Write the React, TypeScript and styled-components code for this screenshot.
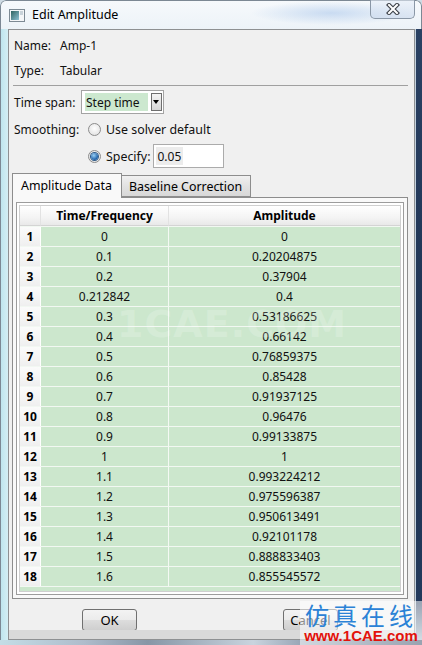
import styled, { createGlobalStyle } from 'styled-components';

const GlobalStyle = createGlobalStyle`
  html, body {
    margin: 0;
    padding: 0;
  }
  body {
    width: 422px;
    height: 645px;
    overflow: hidden;
    background: #cfdbe4;
    font-family: "Noto Sans", "Liberation Sans", sans-serif;
    font-size: 12px;
    color: #111;
  }
`;

const rows: [string, string][] = [
  ['0', '0'],
  ['0.1', '0.20204875'],
  ['0.2', '0.37904'],
  ['0.212842', '0.4'],
  ['0.3', '0.53186625'],
  ['0.4', '0.66142'],
  ['0.5', '0.76859375'],
  ['0.6', '0.85428'],
  ['0.7', '0.91937125'],
  ['0.8', '0.96476'],
  ['0.9', '0.99133875'],
  ['1', '1'],
  ['1.1', '0.993224212'],
  ['1.2', '0.975596387'],
  ['1.3', '0.950613491'],
  ['1.4', '0.92101178'],
  ['1.5', '0.888833403'],
  ['1.6', '0.855545572'],
];

function WindowIcon() {
  return (
    <svg width='16' height='13' viewBox='0 0 16 13'>
      <defs>
        <linearGradient id='wi' x1='0' y1='0' x2='1' y2='1'>
          <stop offset='0' stopColor='#2f6360' />
          <stop offset='1' stopColor='#8cc0d2' />
        </linearGradient>
      </defs>
      <rect x='0.5' y='0.5' width='15' height='12' fill='#f4f6f8' stroke='#7d8a94' />
      <rect x='2' y='2' width='8' height='9' fill='url(#wi)' />
      <rect x='11' y='2' width='3' height='4' fill='#c9d3da' />
    </svg>
  );
}

function CloseGlyph() {
  return (
    <svg width='14' height='12' viewBox='0 0 14 12'>
      <path d='M3 2 L11 10 M11 2 L3 10' stroke='#3a3f46' strokeWidth='4.2' strokeLinecap='square' />
      <path d='M3 2 L11 10 M11 2 L3 10' stroke='#ffffff' strokeWidth='2' strokeLinecap='square' />
    </svg>
  );
}

function App() {
  return (
    <>
      <GlobalStyle />
      <WindowStyle>
        <TitleBar>
          <WindowIcon />
          <TitleText>Edit Amplitude</TitleText>
          <CloseButton>
            <CloseGlyph />
          </CloseButton>
        </TitleBar>
        <FrameBody>
          <LeftEdge />
          <Panel>
            <Content>
              <InfoRow>
                <Label width={46}>Name:</Label>
                <span>Amp-1</span>
              </InfoRow>
              <InfoRow>
                <Label width={46}>Type:</Label>
                <span>Tabular</span>
              </InfoRow>
              <Separator />
              <FieldRow>
                <Label width={67}>Time span:</Label>
                <Combo>
                  <ComboValue>Step time</ComboValue>
                  <ComboArrow />
                </Combo>
              </FieldRow>
              <FieldRow>
                <Label width={74}>Smoothing:</Label>
                <RadioOption>
                  <Radio checked={false} />
                  Use solver default
                </RadioOption>
              </FieldRow>
              <FieldRow>
                <Label width={74} />
                <RadioOption>
                  <Radio checked />
                  Specify:
                </RadioOption>
                <TextInput>
                  <Selected>0.05</Selected>
                </TextInput>
              </FieldRow>

              <TabStrip>
                <Tab active>Amplitude Data</Tab>
                <Tab active={false}>Baseline Correction</Tab>
              </TabStrip>
              <TabPanel>
                <TableFrame>
                  <Grid>
                    <HeaderRow>
                      <HeadCell />
                      <HeadCell>Time/Frequency</HeadCell>
                      <HeadCell>Amplitude</HeadCell>
                    </HeaderRow>
                    {rows.map(([t, a], i) => (
                      <DataRow key={i}>
                        <NumCell>{i + 1}</NumCell>
                        <DataCell divider>{t}</DataCell>
                        <DataCell divider={false}>{a}</DataCell>
                      </DataRow>
                    ))}
                    <Filler />
                  </Grid>
                </TableFrame>
                <BigMark>1CAE.COM</BigMark>
              </TabPanel>
            </Content>
            <ButtonRow>
              <Button>OK</Button>
              <Button>Cancel</Button>
            </ButtonRow>
            <StatusStrip />
          </Panel>
          <RightEdge />
        </FrameBody>
        <FrameBottom />
        <Watermark>
          <MarkCn>仿真在线</MarkCn>
          <MarkUrl>www.1CAE.com</MarkUrl>
        </Watermark>
      </WindowStyle>
    </>
  );
}

const WindowStyle = styled.div`
  position: relative;
  box-sizing: border-box;
  width: 422px;
  height: 645px;
  display: flex;
  flex-direction: column;
  border-radius: 6px 6px 0 0;
  overflow: hidden;
  background: #dbe9f0;
`;

const TitleBar = styled.div`
  box-sizing: border-box;
  height: 29px;
  flex: none;
  display: flex;
  align-items: center;
  gap: 7px;
  padding-left: 8px;
  border: 1px solid #7c8894;
  border-bottom: none;
  border-radius: 6px 6px 0 0;
  background:
    radial-gradient(ellipse 80px 12px at 330px 12px, rgba(150, 185, 230, 0.45), transparent),
    linear-gradient(180deg, #f6f9fc 0%, #edf3f8 100%);
`;

const TitleText = styled.span`
  font-size: 12.5px;
  color: #000;
  margin-top: -1px;
`;

const CloseButton = styled.div`
  margin-left: auto;
  margin-right: 6px;
  align-self: flex-start;
  margin-top: -1px;
  width: 45px;
  height: 19px;
  box-sizing: border-box;
  display: flex;
  align-items: center;
  justify-content: center;
  border: 1px solid #8a97a6;
  border-top: none;
  border-radius: 0 0 5px 5px;
  background: linear-gradient(180deg, rgba(230, 238, 248, 0.6), rgba(200, 215, 235, 0.6));
`;

const FrameBody = styled.div`
  flex: 1;
  min-height: 0;
  display: flex;
`;

const LeftEdge = styled.div`
  flex: 0 0 8px;
  border-left: 1px solid #7c8894;
  box-sizing: border-box;
  background: linear-gradient(90deg, #bfe5ee, #d4eef4);
`;

const RightEdge = styled.div`
  flex: 0 0 7px;
  box-sizing: border-box;
  border-left: 1px solid #c4d2dd;
  background: linear-gradient(180deg, #2a4163 0%, #1d3252 60%, #233a5c 94%, #9fb2c4 100%);
`;

const FrameBottom = styled.div`
  height: 5px;
  flex: none;
  background: linear-gradient(90deg, #c4dde6 0, #aebccb 20%, #8796a6 35%, #c9d4de 60%, #1e3252 100%);
`;

const Panel = styled.div`
  flex: 1;
  min-width: 0;
  display: flex;
  flex-direction: column;
  border: 1px solid #8e9092;
  background: #f0f0f0;
`;

const Content = styled.div`
  display: flex;
  flex-direction: column;
  padding: 3px 6px 0 5px;
`;

const InfoRow = styled.div`
  display: flex;
  align-items: center;
  height: 25px;
`;

const Label = styled.span<{ width: number }>`
  flex: none;
  width: ${({ width }) => width}px;
`;

const Separator = styled.div`
  height: 1px;
  margin: 2px 0 4px -1px;
  background: #a0a0a0;
`;

const FieldRow = styled.div`
  display: flex;
  align-items: center;
  height: 24px;
  margin-bottom: 3px;
`;

const Combo = styled.div`
  box-sizing: border-box;
  height: 24px;
  display: flex;
  align-items: stretch;
  gap: 3px;
  padding: 2px 1px 2px 3px;
  border: 1px solid #a3a3a3;
  background: #fff;
`;

const ComboValue = styled.div`
  width: 62px;
  padding-left: 1px;
  display: flex;
  align-items: center;
  background: #cce8cf;
`;

const ComboArrow = styled.div`
  box-sizing: border-box;
  width: 11px;
  border: 1px solid #6f6f6f;
  background: linear-gradient(180deg, #f4f4f4, #d6d6d6);
  position: relative;
  &::after {
    content: '';
    position: absolute;
    left: 1px;
    top: 6px;
    border-left: 3.5px solid transparent;
    border-right: 3.5px solid transparent;
    border-top: 4px solid #000;
  }
`;

const RadioOption = styled.label`
  display: flex;
  align-items: center;
  gap: 5px;
  font-size: 12.4px;
`;

const Radio = styled.span<{ checked: boolean }>`
  box-sizing: border-box;
  width: 13px;
  height: 13px;
  border-radius: 50%;
  border: 1px solid #8c8c8c;
  background: radial-gradient(circle at 50% 40%, #ffffff, #dcdcdc);
  display: flex;
  align-items: center;
  justify-content: center;
  &::after {
    content: '';
    display: ${({ checked }) => (checked ? 'block' : 'none')};
    width: 7px;
    height: 7px;
    border-radius: 50%;
    background: radial-gradient(circle at 40% 35%, #9ad0f5, #1c5fa8 70%);
    box-shadow: 0 0 0 1px #2f5a87;
  }
`;

const TextInput = styled.div`
  box-sizing: border-box;
  margin-left: 3px;
  width: 71px;
  height: 24px;
  display: flex;
  align-items: stretch;
  padding: 2px;
  border: 1px solid #ababab;
  background: #fff;
`;

const Selected = styled.span`
  display: flex;
  align-items: center;
  padding: 0 2px 0 1px;
  background: #ececec;
`;

const TabStrip = styled.div`
  display: flex;
  align-items: flex-end;
  margin: 2px 0 0 -2px;
  position: relative;
  z-index: 1;
`;

const Tab = styled.div<{ active: boolean }>`
  box-sizing: border-box;
  height: ${({ active }) => (active ? 25 : 22)}px;
  padding: ${({ active }) => (active ? '0 9px 2px 8px' : '0 8px 0 7px')};
  margin-left: ${({ active }) => (active ? 0 : -1)}px;
  margin-bottom: ${({ active }) => (active ? -1 : 0)}px;
  display: flex;
  align-items: center;
  font-size: 12.4px;
  border: 1px solid #8d8d8d;
  border-bottom: ${({ active }) => (active ? 'none' : '1px solid #8d8d8d')};
  background: ${({ active }) =>
    active ? '#f9f9f9' : 'linear-gradient(180deg, #f0f0f0 0%, #e2e2e2 50%, #d8d8d8 100%)'};
  color: #000;
`;

const TabPanel = styled.div`
  position: relative;
  box-sizing: border-box;
  height: 402px;
  margin-left: -2px;
  display: flex;
  padding: 4px 3px 3px 3px;
  border: 1px solid #8d8d8d;
  background: #f9f9f9;
`;

const TableFrame = styled.div`
  flex: 1;
  display: flex;
  padding: 2px;
  border: 1px solid #9c9c9c;
  background: #fff;
`;

const Grid = styled.div`
  flex: 1;
  display: flex;
  flex-direction: column;
  border: 1px solid #cfcfcf;
  background: #cce7cd;
`;

const HeaderRow = styled.div`
  display: grid;
  grid-template-columns: 21px 128px 1fr;
  height: 20px;
`;

const HeadCell = styled.div`
  display: flex;
  align-items: center;
  justify-content: center;
  font-weight: bold;
  color: #000;
  border-right: 1px solid #e2e2e2;
  border-bottom: 1px solid #d4d4d4;
  background: linear-gradient(180deg, #ffffff 0%, #f4f4f4 60%, #e9e9e9 100%);
  &:last-child {
    border-right: none;
  }
`;

const DataRow = styled.div`
  display: grid;
  grid-template-columns: 21px 128px 1fr;
  height: 20px;
  box-sizing: border-box;
  border-top: 1px solid #f2f8f2;
`;

const NumCell = styled.div`
  display: flex;
  align-items: center;
  justify-content: center;
  font-weight: bold;
  color: #000;
  border-right: 1px solid #fff;
  background: linear-gradient(180deg, #fbfbfb 0%, #efefef 100%);
`;

const DataCell = styled.div<{ divider: boolean }>`
  display: flex;
  align-items: center;
  justify-content: center;
  background: #cce7cd;
  border-right: ${({ divider }) => (divider ? '1px solid #f4f9f4' : 'none')};
`;

const Filler = styled.div`
  flex: 1;
  border-top: 1px solid #f2f8f2;
`;

const BigMark = styled.div`
  position: absolute;
  left: 104px;
  top: 104px;
  font-family: "DejaVu Sans", sans-serif;
  font-weight: bold;
  font-size: 38px;
  letter-spacing: 1px;
  color: rgba(255, 255, 255, 0.2);
  pointer-events: none;
`;

const ButtonRow = styled.div`
  display: flex;
  justify-content: space-around;
  margin-top: 10px;
  padding-right: 3px;
`;

const Button = styled.div`
  box-sizing: border-box;
  width: 55px;
  height: 22px;
  display: flex;
  align-items: center;
  justify-content: center;
  border: 1px solid #707070;
  border-radius: 3px;
  background: linear-gradient(180deg, #f3f3f3 0%, #ebebeb 50%, #dddddd 51%, #cfcfcf 100%);
  font-size: 13px;
  color: #000;
`;

const StatusStrip = styled.div`
  flex: 1;
  margin-top: -1px;
  background: #d9d9d9;
`;

const Watermark = styled.div`
  position: absolute;
  right: 0;
  bottom: 0;
  width: 122px;
  height: 44px;
  display: flex;
  flex-direction: column;
  align-items: center;
  background: rgba(255, 255, 255, 0.55);
  pointer-events: none;
`;

const MarkCn = styled.span`
  font-family: "Noto Sans CJK SC", sans-serif;
  font-size: 24px;
  line-height: 28px;
  letter-spacing: 4px;
  color: #2b82d6;
`;

const MarkUrl = styled.span`
  font-family: "Liberation Sans", sans-serif;
  font-weight: bold;
  font-size: 15px;
  line-height: 14px;
  color: #e3120b;
`;

export default App;
